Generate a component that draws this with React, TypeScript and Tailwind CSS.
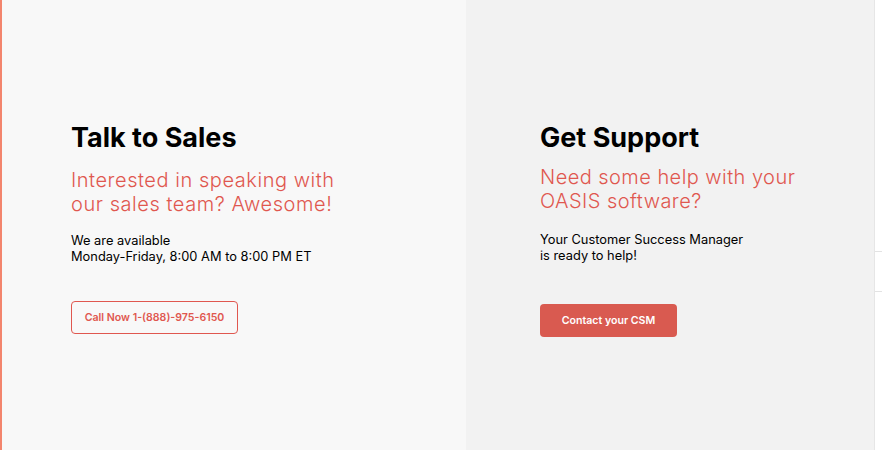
export default function App() {
  return (
    <div className="flex h-[450px] w-[882px] bg-white font-['Inter',sans-serif]">
      <div className="w-[2px] bg-[#f3856d]" />
      <div className="flex w-[464px] flex-col bg-[#f8f8f8] pl-[69px] pt-[121px]">
        <h2 className="text-[27px] font-bold leading-[34px] text-black">Talk to Sales</h2>
        <p className="mt-[13px] text-[20px] font-light leading-[24px] tracking-[0.55px] text-[#e0574f]">
          Interested in speaking with
          <br />
          our sales team? Awesome!
        </p>
        <p className="mt-[17px] text-[12.85px] leading-[16px] text-black">
          We are available
          <br />
          Monday-Friday, 8:00 AM to 8:00 PM ET
        </p>
        <button className="mt-[36px] h-[33px] w-[167px] rounded-[4px] border border-[#e0574f] text-[10.6px] font-semibold text-[#e0574f]">
          Call Now 1-(888)-975-6150
        </button>
      </div>
      <div className="flex w-[408px] flex-col bg-[#f2f2f2] pl-[74px] pt-[121px]">
        <h2 className="text-[27px] font-bold leading-[34px] text-black">Get Support</h2>
        <p className="mt-[10px] text-[20px] font-light leading-[24px] tracking-[0.45px] text-[#e0574f]">
          Need some help with your
          <br />
          OASIS software?
        </p>
        <p className="mt-[19px] text-[12.85px] leading-[16px] text-black">
          Your Customer Success Manager
          <br />
          is ready to help!
        </p>
        <button className="mt-[40px] h-[33px] w-[137px] rounded-[4px] bg-[#d95a50] text-[10.6px] font-semibold text-white">
          Contact your CSM
        </button>
      </div>
      <div className="w-px bg-[#e6e6e6]" />
      <div className="flex flex-1 flex-col pt-[251px]">
        <div className="h-px bg-[#e3e3e3]" />
        <div className="mt-[39px] h-px bg-[#e3e3e3]" />
      </div>
    </div>
  );
}
